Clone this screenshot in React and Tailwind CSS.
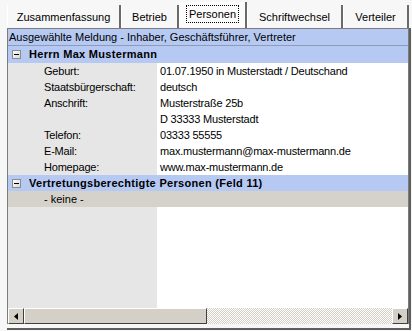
export default function App() {
  const rows = [
    ["Geburt:", "01.07.1950 in Musterstadt / Deutschand"],
    ["Staatsbürgerschaft:", "deutsch"],
    ["Anschrift:", "Musterstraße 25b"],
    ["", "D 33333 Musterstadt"],
    ["Telefon:", "03333 55555"],
    ["E-Mail:", "max.mustermann@max-mustermann.de"],
    ["Homepage:", "www.max-mustermann.de"],
  ];

  const Minus = () => (
    <span className="w-[9px] h-[9px] border border-[#8c8c8c] bg-gradient-to-br from-white to-[#d8d8d8] flex items-center justify-center shrink-0">
      <span className="w-[5px] h-[1px] bg-black" />
    </span>
  );

  const Tab = ({ label, w, selected }) =>
    selected ? (
      <div className={`${w} h-[26px] flex items-start justify-center pt-[3px] bg-[#fbfbfb] border-r-2 border-[#6a6a6a] border-l border-l-white`}>
        <span className="border border-dotted border-black px-[2px] leading-[16px]">{label}</span>
      </div>
    ) : (
      <div className={`${w} h-[23px] flex items-center justify-center bg-[#f7f7f7] border-r-2 border-[#6a6a6a] border-l border-l-white`}>
        <span className="leading-[16px]">{label}</span>
      </div>
    );

  return (
    <div className="w-[412px] h-[331px] bg-[#f7f7f7] font-['Liberation_Sans',sans-serif] text-[11px] text-black overflow-hidden">
      <div className="h-[28px] flex items-end pl-[7px]">
        <Tab label="Zusammenfassung" w="w-[114px]" />
        <Tab label="Betrieb" w="w-[58px]" />
        <Tab label="Personen" w="w-[68px]" selected />
        <Tab label="Schriftwechsel" w="w-[96px]" />
        <Tab label="Verteiler" w="w-[66px]" />
      </div>
      <div className="ml-[7px] w-[404px] h-[302px] flex flex-col border-r-2 border-b-2 border-[#5e5e5e]">
        <div className="h-[296px] flex flex-col border-l border-t border-r border-[#7c7c7c] bg-white">
          <div className="h-[17px] shrink-0 bg-[#b6c9f2] border-b border-[#8e9bb5] pl-[1px] flex items-center leading-[16px]">
            Ausgewählte Meldung - Inhaber, Geschäftsführer, Vertreter
          </div>
          <div className="h-[17px] shrink-0 bg-[#b6c9f2] flex items-center gap-[8px] pl-[4px] font-bold tracking-[0.3px]">
            <Minus />
            <span>Herrn Max Mustermann</span>
          </div>
          {rows.map(([l, v], i) => (
            <div key={i} className="h-[16px] shrink-0 flex leading-[16px] tracking-[-0.2px]">
              <div className="w-[149px] bg-[#e6e6e6] pl-[36px]">{l}</div>
              <div className="flex-1 pl-[3px]">{v}</div>
            </div>
          ))}
          <div className="h-[16px] shrink-0 bg-[#b6c9f2] flex items-center gap-[8px] pl-[4px] font-bold tracking-[0.3px]">
            <Minus />
            <span>Vertretungsberechtigte Personen (Feld 11)</span>
          </div>
          <div className="h-[16px] shrink-0 bg-[#d5d2cc] pl-[36px] leading-[16px]">- keine -</div>
          <div className="flex-1 flex">
            <div className="w-[149px] bg-[#e6e6e6]" />
            <div className="flex-1 bg-white" />
          </div>
          <div className="h-[16px] shrink-0 flex bg-[repeating-conic-gradient(#d4d0c8_0%_25%,#ffffff_0%_50%)] bg-[length:2px_2px]">
            <div className="w-[16px] h-[16px] bg-[#d4d0c8] border border-t-white border-l-white border-r-[#404040] border-b-[#404040] flex items-center justify-center">
              <svg width="4" height="7" viewBox="0 0 4 7"><path d="M4 0 L0 3.5 L4 7 Z" fill="#000" /></svg>
            </div>
            <div className="w-[183px] h-[16px] bg-[#d4d0c8] border border-t-white border-l-white border-r-[#404040] border-b-[#404040]" />
            <div className="flex-1" />
            <div className="w-[16px] h-[16px] bg-[#d4d0c8] border border-t-white border-l-white border-r-[#404040] border-b-[#404040] flex items-center justify-center">
              <svg width="4" height="7" viewBox="0 0 4 7"><path d="M0 0 L4 3.5 L0 7 Z" fill="#000" /></svg>
            </div>
          </div>
        </div>
      </div>
    </div>
  );
}
